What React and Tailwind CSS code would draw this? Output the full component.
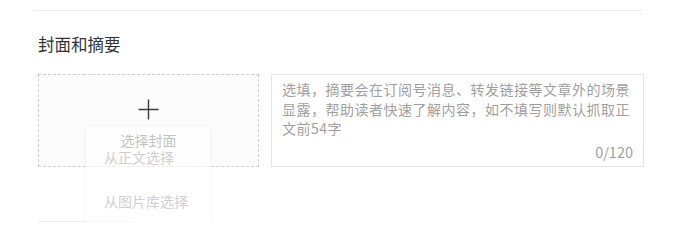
const font = { fontFamily: '"Microsoft YaHei", "Noto Sans CJK SC", "Noto Sans", sans-serif' };

function PlusIcon() {
    return (
        <svg width="21" height="21" viewBox="0 0 21 21" className="text-[#3a3a3a]">
            <path d="M10.5 0.5v20M0.5 10.5h20" stroke="currentColor" strokeWidth="1.4" fill="none" />
        </svg>
    );
}

function CoverPicker() {
    return (
        <div className="relative w-[221px] h-[93px] shrink-0 border border-dashed border-[#cfcfcf] bg-[#fcfcfc]">
            <div className="flex flex-col items-center pt-[24px]">
                <PlusIcon />
                <div className="mt-[10px] text-[14px] leading-[20px] text-[#6a6a6a]">选择封面</div>
            </div>

            {/* dropdown, fading in */}
            <div className="absolute left-[47px] top-[52px] w-[124px] h-[100px] bg-white/60 shadow-[0_1px_6px_rgba(0,0,0,0.05)]">
                <div className="h-[43px] pl-[18px] pt-[20px] text-[14px] leading-[20px] text-[#cfcfcf]">从正文选择</div>
                <div className="h-[43px] pl-[18px] pt-[21px] text-[14px] leading-[20px] text-[#cfcfcf]">从图片库选择</div>
            </div>
        </div>
    );
}

function DigestInput() {
    return (
        <div className="flex flex-col w-[373px] h-[93px] border border-[#e6e6e6] bg-white pl-[10px] pr-[8px] pt-[5px]">
            <p className="text-[14px] leading-[19.5px] tracking-[0.5px] text-[#9f9f9f] whitespace-nowrap">
                选填，摘要会在订阅号消息、转发链接等文章外的场景
                <br />
                显露，帮助读者快速了解内容，如不填写则默认抓取正
                <br />
                文前54字
            </p>
            <div className="mt-auto mb-[4px] pr-[2px] text-right text-[14.5px] leading-[20px] text-[#9f9f9f]">0/120</div>
        </div>
    );
}

export default function App() {
    return (
        <div className="w-[700px] h-[222px] overflow-hidden bg-white pl-[33px] pt-[10px]" style={font}>
            <div className="w-[610px] h-px bg-[#ececec]" />
            <div className="pl-[5px]">
                <h3 className="mt-[23px] text-[16.5px] leading-[20px] text-[#333]">封面和摘要</h3>
                <div className="mt-[20px] flex gap-[12px]">
                    <CoverPicker />
                    <DigestInput />
                </div>
                <div className="mt-[54px] w-[97px] h-px bg-[#ebebeb]" />
            </div>
        </div>
    );
}
